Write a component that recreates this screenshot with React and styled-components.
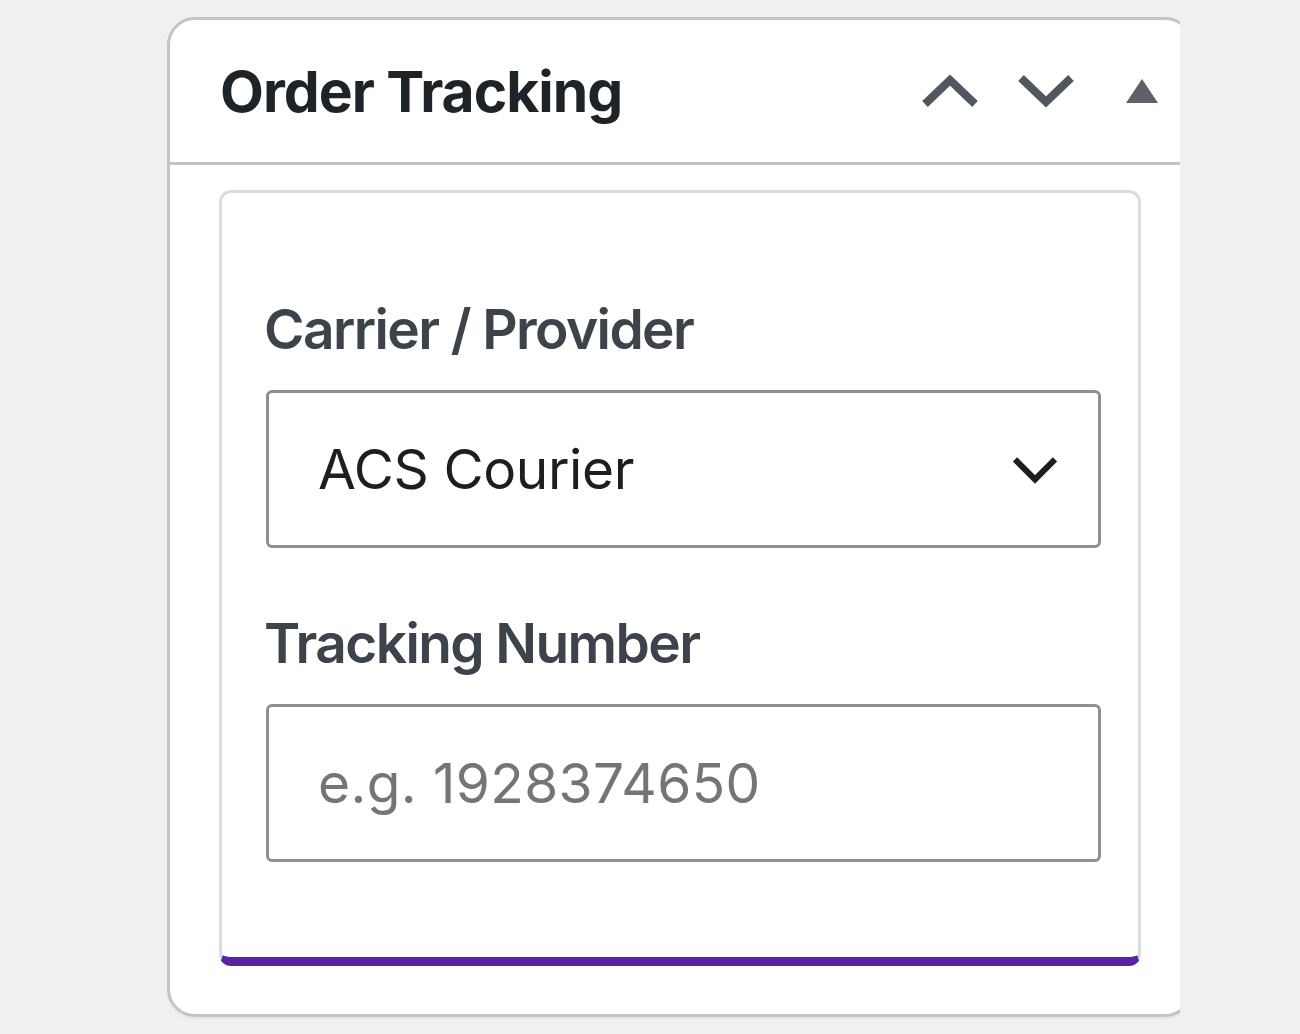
import React from 'react';
import styled, { createGlobalStyle } from 'styled-components';

const GlobalStyle = createGlobalStyle`
    html, body {
        margin:0;
        padding:0;
        background:#f0f0f1;
    }
    body {
        font-family: Inter, "Noto Sans", "Liberation Sans", sans-serif;
    }
`;

const Page = styled.div`
    width:1300px;
    height:1034px;
    box-sizing:border-box;
    padding-top:17px;
    padding-left:167px;
`;

const Clip = styled.div`
    width:1013px;
    overflow:hidden;
    padding-bottom:6px;
`;

const Panel = styled.div`
    width:1026px;
    box-sizing:border-box;
    background:#fff;
    border:3px solid #c3c4c7;
    border-radius:28px;
    box-shadow:0 2px 3px rgba(0,0,0,0.05);
`;

const Header = styled.div`
    height:142px;
    display:flex;
    align-items:center;
    border-bottom:3px solid #c3c4c7;
    padding-left:50px;
`;

const Title = styled.h2`
    flex:1;
    margin:0;
    font-size:57px;
    font-weight:700;
    color:#1d2327;
    letter-spacing:-1px;
`;

const IconButton = styled.button`
    width:96px;
    height:96px;
    padding:0;
    border:0;
    background:none;
    display:flex;
    align-items:center;
    justify-content:center;
    color:${p => p.color || '#50575e'};
`;

const Body = styled.div`
    padding:25px 49px 48px;
`;

const Card = styled.div`
    box-sizing:border-box;
    padding:103px 37px 95px 44px;
    border:3px solid #dcdcde;
    border-bottom:9px solid #5722a3;
    border-radius:12px;
`;

const Field = styled.div`
    & + & {
        margin-top:62px;
    }
`;

const Label = styled.label`
    display:block;
    margin-left:-2px;
    margin-bottom:28px;
    font-size:55px;
    line-height:66px;
    font-weight:600;
    color:#3c434a;
    letter-spacing:-1.6px;
`;

const SelectWrap = styled.div`
    position:relative;
`;

const Select = styled.select`
    width:100%;
    height:158px;
    box-sizing:border-box;
    appearance:none;
    -webkit-appearance:none;
    border:3px solid #8c8f94;
    border-radius:6px;
    background:#fff;
    padding:0 100px 0 49px;
    font-family:inherit;
    font-size:55px;
    letter-spacing:-0.4px;
    color:#1e1e1e;
    outline:none;
`;

const Chevron = styled.span`
    position:absolute;
    right:43px;
    top:50%;
    transform:translateY(-45%);
    display:flex;
    pointer-events:none;
`;

const Input = styled.input`
    width:100%;
    height:158px;
    box-sizing:border-box;
    border:3px solid #8c8f94;
    border-radius:6px;
    padding:0 40px 0 49px;
    font-family:inherit;
    font-size:55px;
    letter-spacing:0.4px;
    color:#1e1e1e;
    outline:none;
    &::placeholder {
        color:#757575;
    }
`;

function UpIcon(){
    return(
        <svg width="56" height="34" viewBox="0 0 56 34">
            <polyline points="3,30 28,6 53,30" fill="none" stroke="currentColor" strokeWidth="8"/>
        </svg>
    );
}

function DownIcon(){
    return(
        <svg width="56" height="34" viewBox="0 0 56 34">
            <polyline points="3,4 28,28 53,4" fill="none" stroke="currentColor" strokeWidth="8"/>
        </svg>
    );
}

function TriangleIcon(){
    return(
        <svg width="32" height="24" viewBox="0 0 32 24">
            <polygon points="16,0 32,24 0,24" fill="currentColor"/>
        </svg>
    );
}

export default function App(){
    return(
        <Page>
            <GlobalStyle/>
            <Clip>
                <Panel>
                    <Header>
                        <Title>Order Tracking</Title>
                        <IconButton aria-label="Move up"><UpIcon/></IconButton>
                        <IconButton aria-label="Move down"><DownIcon/></IconButton>
                        <IconButton aria-label="Toggle panel" color="#5f6168"><TriangleIcon/></IconButton>
                    </Header>
                    <Body>
                        <Card>
                            <Field>
                                <Label htmlFor="carrier">Carrier / Provider</Label>
                                <SelectWrap>
                                    <Select id="carrier" defaultValue="acs">
                                        <option value="acs">ACS Courier</option>
                                        <option value="elta">ELTA Courier</option>
                                        <option value="geniki">Geniki Taxydromiki</option>
                                    </Select>
                                    <Chevron>
                                        <svg width="46" height="28" viewBox="0 0 46 28">
                                            <polyline points="3,3 23,23 43,3" fill="none" stroke="#1e1e1e" strokeWidth="6"/>
                                        </svg>
                                    </Chevron>
                                </SelectWrap>
                            </Field>
                            <Field>
                                <Label htmlFor="tracking">Tracking Number</Label>
                                <Input id="tracking" type="text" placeholder="e.g. 1928374650"/>
                            </Field>
                        </Card>
                    </Body>
                </Panel>
            </Clip>
        </Page>
    );
}
